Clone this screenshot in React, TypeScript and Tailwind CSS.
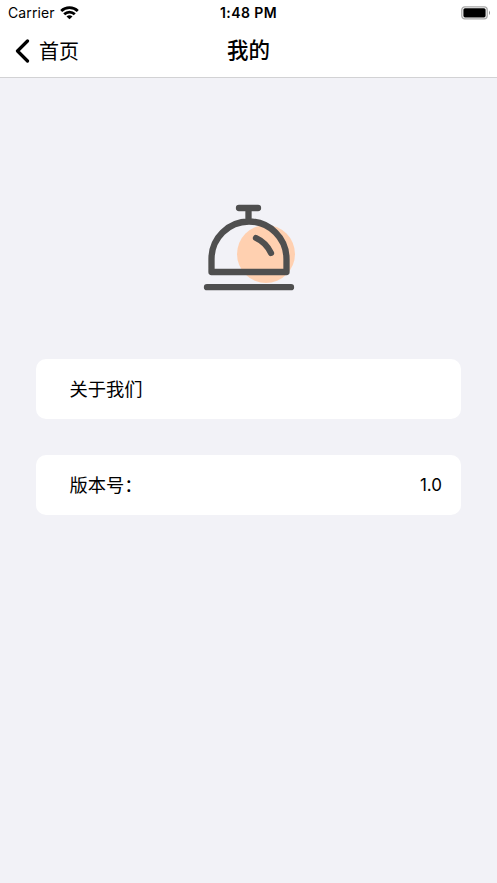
const latin = "font-['Inter','Noto_Sans_CJK_SC',sans-serif]";

function StatusBar() {
  return (
    <div className="grid h-[26px] grid-cols-3 items-center pr-[6px] pl-[8px] text-[14px] leading-none">
      <div className="flex items-center gap-[5px]">
        <span className="tracking-[0.1px]">Carrier</span>
        <svg width="19" height="14" viewBox="0 0 19 14" fill="none" stroke="#000" strokeWidth="2.8">
          <path d="M1.200 5C5.800 .5 13.200 .5 17.800 5" />
          <path d="M4.200 8.300C7.200 5.400 11.800 5.400 14.800 8.300" />
          <path d="M9.500 13.300 6.500 10.500Q9.500 8.100 12.500 10.500Z" fill="#000" stroke="none" />
        </svg>
      </div>
      <span className="pr-[2px] text-center font-semibold tracking-[0.4px] whitespace-nowrap">1:48 PM</span>
      <svg className="justify-self-end" width="30" height="14" viewBox="0 0 30 14">
        <rect x=".8" y=".8" width="25.400" height="12" rx="3" fill="none" stroke="#a8a8a8" strokeWidth="1.300" />
        <rect x="2.400" y="2.200" width="22.200" height="9.200" rx="1.600" fill="#000" />
        <path d="M28 4.500Q30 6.800 28 9Z" fill="#888" />
      </svg>
    </div>
  );
}

function Bell() {
  return (
    <svg width="92" height="88" viewBox="203 204 92 88" fill="none" stroke="#4f4f4f" strokeWidth="6.300" strokeLinecap="round" strokeLinejoin="round">
      <circle cx="266" cy="254" r="29" fill="#ffd0b0" stroke="none" />
      <path d="M239 208H258M248.500 208V221M211.500 272V259A37.500 37.500 0 0 1 286.500 259V272ZM207 287.200H291M256 238Q266 242.500 271 253" />
    </svg>
  );
}

function Row({ label, value }: { label: string; value?: string }) {
  return (
    <div className="flex h-[60px] items-center justify-between rounded-[10px] bg-white pr-[19px] pl-[33.5px] text-[18.3px]">
      <span className="pt-[2px]">{label}</span>
      <span className="pt-[2px] text-[17px]">{value}</span>
    </div>
  );
}

export default function App() {
  return (
    <div className={`h-[883px] w-[497px] bg-[#f2f2f7] text-black ${latin}`}>
      <header className="h-[78px] border-b border-[#d2d2d4] bg-white">
        <StatusBar />
        <nav className="grid h-[50px] grid-cols-3 items-center">
          <div className="flex items-center gap-[9px] pl-[15px] text-[20px]">
            <svg width="15" height="24" viewBox="0 0 15 24" fill="none" stroke="#000" strokeWidth="3.2" strokeLinecap="round" strokeLinejoin="round">
              <path d="M12.500 2 2.500 12 12.500 22" />
            </svg>
            <span className="pt-[1px]">首页</span>
          </div>
          <h1 className="pb-[2px] text-center text-[21.5px] font-medium">我的</h1>
        </nav>
      </header>
      <main className="px-[36px]">
        <div className="flex justify-center pt-[126px]"><Bell /></div>
        <div className="mt-[67px] flex flex-col gap-[36px]">
          <Row label="关于我们" />
          <Row label="版本号：" value="1.0" />
        </div>
      </main>
    </div>
  );
}
